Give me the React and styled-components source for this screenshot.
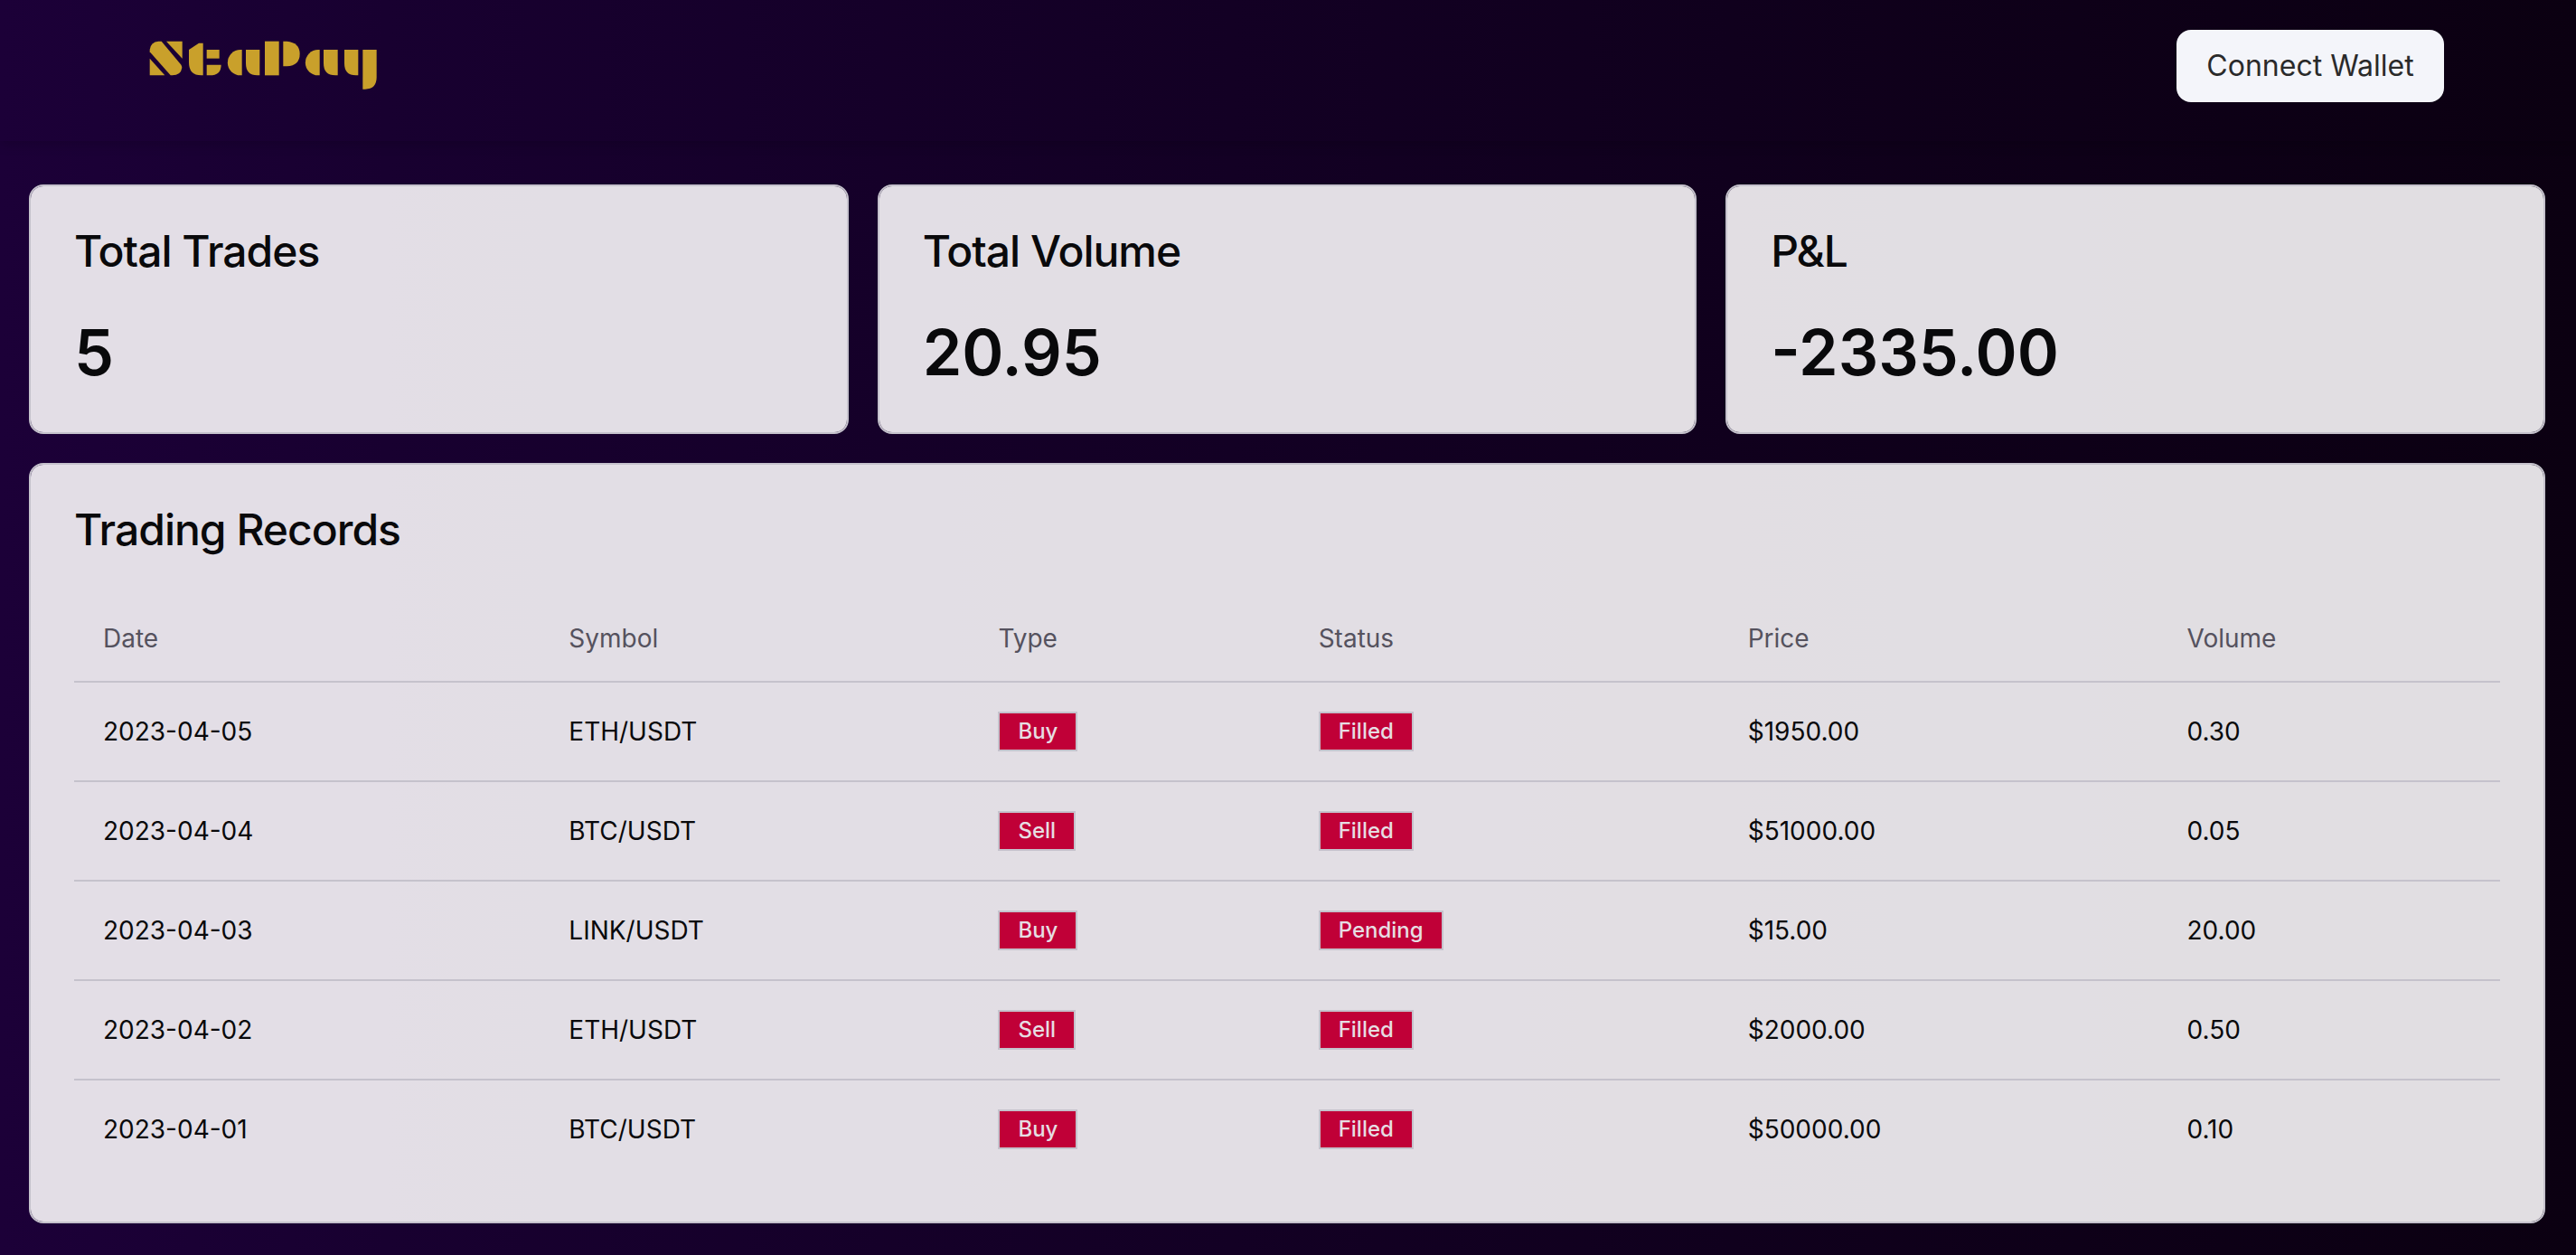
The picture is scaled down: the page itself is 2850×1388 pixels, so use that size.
import React from "react";
import styled, { createGlobalStyle } from "styled-components";

const GlobalStyle = createGlobalStyle`
  * { box-sizing: border-box; }
  body {
    margin: 0;
    background: #0b0011;
    font-family: Inter, "Liberation Sans", sans-serif;
    color: #09090b;
  }
`;

const Page = styled.div`
  min-height: 100vh;
  background: linear-gradient(90deg, #1c0038 0%, #180030 15%, #0b0011 100%);
`;

const Header = styled.header`
  display: flex;
  align-items: center;
  justify-content: space-between;
  padding: 33px 146px 43px 165px;
  box-shadow: 0 4px 12px rgba(0, 0, 0, 0.15);
`;

const LogoLink = styled.a`
  display: block;
  color: #c9a02b;

  svg {
    display: block;
  }
`;

const WalletButton = styled.button`
  min-width: 296px;
  height: 80px;
  padding: 0 32px;
  border: 0;
  border-radius: 16px;
  background: #f4f5fa;
  color: #2a2a2a;
  font: 400 32px/48px Inter, "Liberation Sans", sans-serif;
`;

const Main = styled.main`
  display: grid;
  gap: 32px;
  padding: 48px 34px 34px 32px;
`;

const Stats = styled.section`
  display: grid;
  grid-template-columns: repeat(3, 1fr);
  gap: 32px;
`;

const Card = styled.section`
  display: grid;
  gap: 48px;
  padding: 48px;
  border: 2px solid #c5c2cc;
  border-radius: 16px;
  background: rgba(255, 253, 255, 0.88);
  background-clip: padding-box;
`;

const CardTitle = styled.h2`
  margin: 0;
  font-size: 48px;
  font-weight: 500;
  line-height: 48px;
  letter-spacing: -1px;
`;

const StatValue = styled.p`
  margin: 0;
  font-size: 70px;
  font-weight: 600;
  line-height: 80px;
`;

const Table = styled.table`
  width: 100%;
  table-layout: fixed;
  border-collapse: separate;
  border-spacing: 0;
  font-size: 28px;
  line-height: 40px;
  text-align: left;
`;

const HeadCell = styled.th`
  width: ${(p) => p.$width};
  height: 97px;
  padding: 0 32px;
  border-bottom: 2px solid #c5c2cc;
  color: #55525e;
  font-weight: 400;
`;

const Cell = styled.td`
  height: 110px;
  padding: 0 32px;
  border-bottom: 2px solid #c5c2cc;

  tr:last-child > & {
    height: 108px;
    border-bottom: 0;
  }
`;

const Badge = styled.span`
  display: block;
  width: fit-content;
  padding: 4px 20px;
  border: 2px solid #c5c2cc;
  background: #c00037;
  color: #e6dde2;
  font-size: 24px;
  font-weight: 500;
  line-height: 32px;
`;

const stats = [
  { label: "Total Trades", value: "5" },
  { label: "Total Volume", value: "20.95" },
  { label: "P&L", value: "-2335.00" },
];

const columns = [
  { label: "Date", width: "19.2%" },
  { label: "Symbol", width: "17.7%" },
  { label: "Type", width: "13.2%" },
  { label: "Status", width: "17.7%" },
  { label: "Price", width: "18.1%" },
  { label: "Volume", width: "14.1%" },
];

const records = [
  { date: "2023-04-05", symbol: "ETH/USDT", type: "Buy", status: "Filled", price: "$1950.00", volume: "0.30" },
  { date: "2023-04-04", symbol: "BTC/USDT", type: "Sell", status: "Filled", price: "$51000.00", volume: "0.05" },
  { date: "2023-04-03", symbol: "LINK/USDT", type: "Buy", status: "Pending", price: "$15.00", volume: "20.00" },
  { date: "2023-04-02", symbol: "ETH/USDT", type: "Sell", status: "Filled", price: "$2000.00", volume: "0.50" },
  { date: "2023-04-01", symbol: "BTC/USDT", type: "Buy", status: "Filled", price: "$50000.00", volume: "0.10" },
];

function Logo() {
  return (
    <svg width="254" height="56" viewBox="75 76 762 168" fill="currentColor" role="img" aria-label="StaPay">
      <path d="M116 78 L180 155 Q184 160 184 166 Q180 191 152 191 H146 L77 113 V106 Q80 80 106 78Z" />
      <path d="M132 78H185V135Z" />
      <path d="M77 135L127 191H77Z" />
      <path d="M240 84H254V191H248Q207 191 207 148V106Z" />
      <path d="M266 106H308V135H266Z" />
      <path d="M266 156H314Q314 191 276 191H266Z" />
      <path d="M383 106V191H378A42.500 42.500 0 0 1 378 106Z" />
      <path d="M396 106H442V191H434Q396 191 396 151Z" />
      <path d="M459 78H506V191H459Z" />
      <path d="M520 78H532Q575 82 575 120T532 161H520Z" />
      <path d="M641 106V191H636A42.500 42.500 0 0 1 636 106Z" />
      <path d="M654 106H701V191H693Q654 191 654 151Z" />
      <path d="M723 106H769V191H761Q723 191 723 151Z" />
      <path d="M784 106H830V197Q830 237 792 237H784Z" />
    </svg>
  );
}

export default function App() {
  return (
    <Page>
      <GlobalStyle />
      <Header>
        <LogoLink href="#" aria-label="StaPay">
          <Logo />
        </LogoLink>
        <WalletButton type="button">Connect Wallet</WalletButton>
      </Header>
      <Main>
        <Stats>
          {stats.map((s) => (
            <Card key={s.label}>
              <CardTitle>{s.label}</CardTitle>
              <StatValue>{s.value}</StatValue>
            </Card>
          ))}
        </Stats>
        <Card>
          <CardTitle>Trading Records</CardTitle>
          <Table>
            <thead>
              <tr>
                {columns.map((c) => (
                  <HeadCell key={c.label} scope="col" $width={c.width}>
                    {c.label}
                  </HeadCell>
                ))}
              </tr>
            </thead>
            <tbody>
              {records.map((r) => (
                <tr key={r.date}>
                  <Cell>{r.date}</Cell>
                  <Cell>{r.symbol}</Cell>
                  <Cell>
                    <Badge>{r.type}</Badge>
                  </Cell>
                  <Cell>
                    <Badge>{r.status}</Badge>
                  </Cell>
                  <Cell>{r.price}</Cell>
                  <Cell>{r.volume}</Cell>
                </tr>
              ))}
            </tbody>
          </Table>
        </Card>
      </Main>
    </Page>
  );
}
